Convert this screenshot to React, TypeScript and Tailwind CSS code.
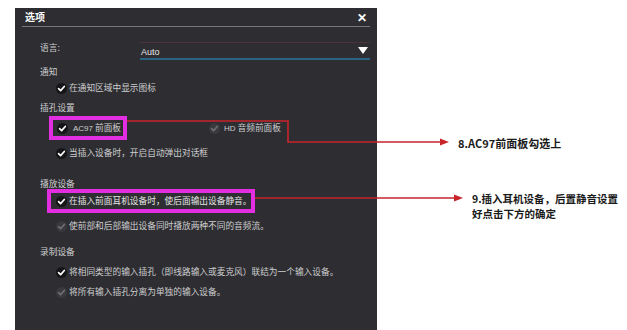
import React from "react";

const cjk = { fontFamily: '"Noto Sans CJK SC", "Noto Sans", sans-serif' };

function Check({ on = true }: { on?: boolean }) {
  return (
    <svg width="11" height="11" viewBox="0 0 11 11" className="shrink-0">
      <circle cx="5.5" cy="5.5" r="5.5" fill={on ? "#151517" : "#3a3a3e"} />
      <path
        d="M2.6 5.7 L4.6 7.6 L8.3 3.5"
        fill="none"
        stroke={on ? "#ffffff" : "#6e6e72"}
        strokeWidth="1.7"
        strokeLinecap="round"
        strokeLinejoin="round"
      />
    </svg>
  );
}

function Row({ mt, children, className = "" }: { mt: string; children: React.ReactNode; className?: string }) {
  return <div className={`flex h-[16px] items-center whitespace-nowrap ${mt} ${className}`}>{children}</div>;
}

export default function App() {
  return (
    <div className="relative h-[330px] w-[627px] overflow-hidden bg-white" style={cjk}>
      <div className="ml-[15px] mt-[8px] h-[322px] w-[362px] bg-[#2e2e32] text-[8.7px] leading-none text-[#cdcdcf]">
        {/* title */}
        <div className="flex h-[18px] items-center justify-between pl-[10px] pr-[10px]">
          <span className="text-[10px] font-bold text-white">选项</span>
          <span className="text-[12px] font-bold text-white">✕</span>
        </div>
        <div className="mx-[7px] h-px bg-[#77777a]" />

        <div className="pl-[25px] pr-[7px]">
          {/* language */}
          <div className="mt-[15px] flex h-[18px]">
            <div className="flex w-[100px] items-center pb-[6px]">语言:</div>
            <div className="flex flex-1 items-center justify-between border-t border-b-2 border-t-[#4a3437] border-b-[#2a6484] pl-[1px] pr-[2px] pt-[4px]">
              <span className="text-[9px] text-[#e6e6e6]" style={{ fontFamily: '"Liberation Sans", sans-serif' }}>
                Auto
              </span>
              <svg width="10" height="7" viewBox="0 0 10 7" className="mb-[5px]">
                <path d="M0 0 L10 0 L5 7 Z" fill="#ffffff" />
              </svg>
            </div>
          </div>

          <Row mt="mt-[4px]">通知</Row>
          <Row mt="mt-0" className="gap-[2px] pl-[16px]">
            <Check />
            <span>在通知区域中显示图标</span>
          </Row>

          <Row mt="mt-[4px]">插孔设置</Row>
          <Row mt="mt-[4px]">
            <div className="ml-[13px] flex h-[16px] w-[70px] items-center gap-[5px] pl-[4px] outline-[4px] outline-[#e22de0] outline-solid">
              <Check />
              <span>
                <span className="text-[8px]" style={{ fontFamily: '"Liberation Sans", sans-serif' }}>AC97</span> 前面板
              </span>
            </div>
            <div className="ml-[86px] flex items-center gap-[4px]">
              <Check on={false} />
              <span>
                <span className="text-[8px]" style={{ fontFamily: '"Liberation Sans", sans-serif' }}>HD</span> 音频前面板
              </span>
            </div>
          </Row>
          <Row mt="mt-[9px]" className="gap-[2px] pl-[16px]">
            <Check />
            <span>当插入设备时，开启自动弹出对话框</span>
          </Row>

          <Row mt="mt-[15px]">播放设备</Row>
          <Row mt="mt-[1px]">
            <div className="ml-[11px] flex h-[16px] w-[200px] items-center gap-[2px] pl-[5px] outline-[4px] outline-[#e22de0] outline-solid">
              <Check />
              <span className="text-[#e4e4e4]">在插入前面耳机设备时，使后面输出设备静音。</span>
            </div>
          </Row>
          <Row mt="mt-[9px]" className="gap-[2px] pl-[16px]">
            <Check on={false} />
            <span>使前部和后部输出设备同时播放两种不同的音频流。</span>
          </Row>

          <Row mt="mt-[10px]">录制设备</Row>
          <Row mt="mt-[4px]" className="gap-[2px] pl-[16px]">
            <Check />
            <span>将相同类型的输入插孔（即线路输入或麦克风）联结为一个输入设备。</span>
          </Row>
          <Row mt="mt-[4px]" className="gap-[2px] pl-[16px]">
            <Check on={false} />
            <span>将所有输入插孔分离为单独的输入设备。</span>
          </Row>
        </div>
      </div>

      {/* annotation lines */}
      <svg className="pointer-events-none absolute left-0 top-0" width="627" height="330">
        <path d="M127 121 H288 V142 H446" fill="none" stroke="#c8252b" strokeWidth="1.6" />
        <path d="M440 138.5 L449 142 L440 145.5 Z" fill="#c8252b" />
        <path d="M255 198 H460" fill="none" stroke="#c8252b" strokeWidth="1.6" />
        <path d="M454 194.5 L463 198 L454 201.5 Z" fill="#c8252b" />
      </svg>

      <div className="absolute left-[458px] top-[136px] text-[11px] font-bold leading-[14px] text-[#1a1a1a]">
        8.AC97前面板勾选上
      </div>
      <div className="absolute left-[472px] top-[191px] flex flex-col text-[10.5px] font-bold leading-[15px] text-[#1a1a1a]">
        <span className="whitespace-nowrap">9.插入耳机设备，后置静音设置</span>
        <span className="whitespace-nowrap">好点击下方的确定</span>
      </div>
    </div>
  );
}
